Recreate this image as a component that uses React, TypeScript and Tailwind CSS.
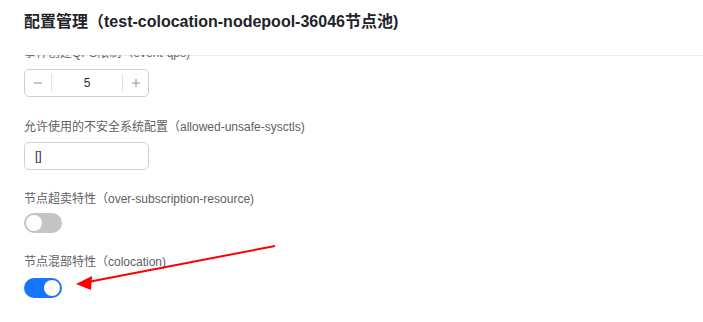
import React from "react";

const font = { fontFamily: '"Liberation Sans", "Noto Sans CJK SC", sans-serif' };

function Label({ children, className = "" }: { children: React.ReactNode; className?: string }) {
  return (
    <div className={`text-[12px] leading-[18px] text-[#5f6066] whitespace-nowrap ${className}`}>{children}</div>
  );
}

function Switch({ on, className = "" }: { on: boolean; className?: string }) {
  return (
    <div
      className={`w-[38px] h-[20px] rounded-full flex items-center px-[2px] ${
        on ? "bg-[#1476ff] justify-end" : "bg-[#c4c4c4] justify-start"
      } ${className}`}
    >
      <div className="w-[16px] h-[16px] rounded-full bg-white" />
    </div>
  );
}

export default function App() {
  return (
    <div className="relative w-[703px] h-[322px] bg-white overflow-hidden flex flex-col" style={font}>
      <div className="h-[55px] shrink-0 px-6 pt-[11px]">
        <h1 className="text-[16px] leading-[22px] font-bold text-[#1f2329] whitespace-nowrap">
          配置管理（test-colocation-nodepool-36046节点池)
        </h1>
      </div>
      <div className="flex-1 overflow-hidden pl-6 flex flex-col items-start bg-[linear-gradient(#ececec,#ececec)] bg-no-repeat bg-[length:100%_1px] bg-[position:24px_0]">
        <Label className="mt-[-11px]">事件创建QPS限制（event-qps)</Label>
        <div className="mt-[7px] w-[125px] h-[28px] border border-[#cfd0d3] rounded-[5px] flex items-center">
          <div className="w-[26px] h-full flex items-center justify-center">
            <svg width="10" height="10" viewBox="0 0 10 10">
              <path d="M1 5h8" stroke="#8a8e99" strokeWidth="1" />
            </svg>
          </div>
          <div className="w-px h-[18px] bg-[#e3e3e6]" />
          <div className="flex-1 text-center text-[12px] text-[#252b3a]">5</div>
          <div className="w-px h-[18px] bg-[#e3e3e6]" />
          <div className="w-[25px] h-full flex items-center justify-center">
            <svg width="10" height="10" viewBox="0 0 10 10">
              <path d="M1 5h8M5 1v8" stroke="#8a8e99" strokeWidth="1" />
            </svg>
          </div>
        </div>
        <Label className="mt-[21px]">允许使用的不安全系统配置（allowed-unsafe-sysctls)</Label>
        <div className="mt-[6px] w-[125px] h-[28px] border border-[#cfd0d3] rounded-[5px] flex items-center px-[10px] text-[12px] text-[#252b3a]">
          []
        </div>
        <Label className="mt-[20px]">节点超卖特性（over-subscription-resource)</Label>
        <Switch on={false} className="mt-[5px]" />
        <Label className="mt-[20px]">节点混部特性（colocation)</Label>
        <Switch on={true} className="mt-[7px]" />
      </div>
      <svg className="absolute left-0 top-0 pointer-events-none" width="703" height="322" viewBox="0 0 703 322">
        <line x1="275" y1="246" x2="88" y2="282" stroke="#ff0000" strokeWidth="2" />
        <polygon points="76,284 92,276 91,290" fill="#ff0000" />
      </svg>
    </div>
  );
}
